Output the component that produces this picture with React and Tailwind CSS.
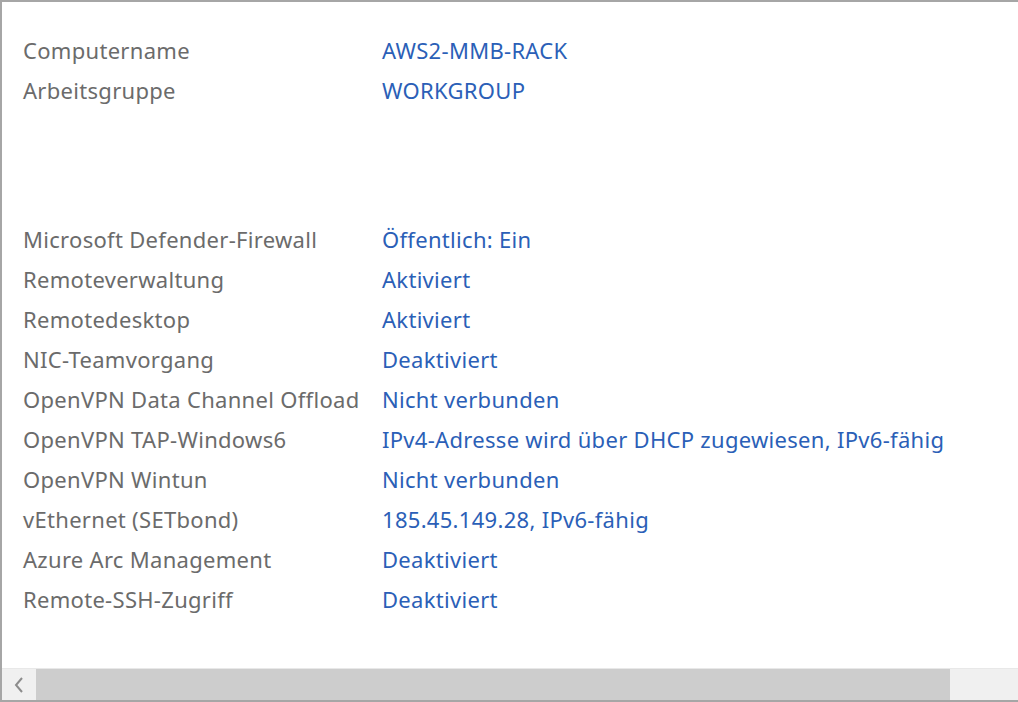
const GENERAL = [
  ['Computername', 'AWS2-MMB-RACK'],
  ['Arbeitsgruppe', 'WORKGROUP'],
];

const NETWORK = [
  ['Microsoft Defender-Firewall', 'Öffentlich: Ein'],
  ['Remoteverwaltung', 'Aktiviert'],
  ['Remotedesktop', 'Aktiviert'],
  ['NIC-Teamvorgang', 'Deaktiviert'],
  ['OpenVPN Data Channel Offload', 'Nicht verbunden'],
  ['OpenVPN TAP-Windows6', 'IPv4-Adresse wird über DHCP zugewiesen, IPv6-fähig'],
  ['OpenVPN Wintun', 'Nicht verbunden'],
  ['vEthernet (SETbond)', '185.45.149.28, IPv6-fähig'],
  ['Azure Arc Management', 'Deaktiviert'],
  ['Remote-SSH-Zugriff', 'Deaktiviert'],
];

function PropertyRows({ rows }) {
  return (
    <div className="flex flex-col">
      {rows.map(([label, value]) => (
        <div key={label} className="flex h-10 items-center">
          <span className="w-[359px] shrink-0 text-[#6b6b6b]">{label}</span>
          <span className="text-[#2b5fb7]">{value}</span>
        </div>
      ))}
    </div>
  );
}

export default function App() {
  return (
    <div
      className="flex h-[702px] w-[1018px] flex-col overflow-hidden border-t-2 border-l-2 border-b-2 border-[#a6a6a6] bg-white text-[22px] leading-none tracking-[0.3px]"
      style={{ fontFamily: '"Noto Sans", "Open Sans", sans-serif' }}
    >
      <div className="flex flex-1 flex-col pl-[21px] pt-[28px]">
        <PropertyRows rows={GENERAL} />
        <div className="h-[109px]" />
        <PropertyRows rows={NETWORK} />
      </div>

      <div className="flex h-[32px] border-t border-[#e8e8e8] bg-[#f0f0f0]">
        <div className="flex w-[34px] items-center justify-center">
          <svg width="12" height="18" viewBox="0 0 12 18" fill="none">
            <path d="M9 2 L3 9 L9 16" stroke="#8c8c8c" strokeWidth="2" />
          </svg>
        </div>
        <div className="w-[914px] bg-[#cdcdcd]" />
        <div className="flex-1" />
      </div>
    </div>
  );
}
